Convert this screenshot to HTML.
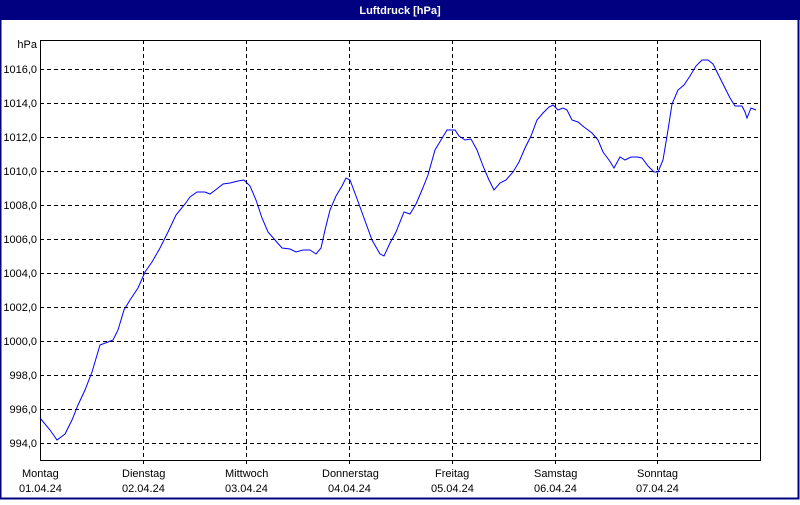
<!DOCTYPE html>
<html><head><meta charset="utf-8"><style>
body{margin:0;width:800px;height:500px;overflow:hidden;background:#fff;font-family:"Liberation Sans",sans-serif}
</style></head><body>
<svg width="800" height="500" xmlns="http://www.w3.org/2000/svg" font-family="Liberation Sans, sans-serif" font-size="11">
<rect x="0" y="0" width="800" height="500" fill="#fff"/>
<rect x="0.5" y="0.5" width="798" height="498" fill="none" stroke="#000080" stroke-width="2"/>
<rect x="0" y="0" width="800" height="20" fill="#000080"/>
<text x="400" y="14" fill="#fff" font-weight="bold" text-anchor="middle">Luftdruck [hPa]</text>
<g stroke="#000" stroke-dasharray="4,3" stroke-width="1">
<line x1="40" y1="69.5" x2="760" y2="69.5"/><line x1="40" y1="103.5" x2="760" y2="103.5"/><line x1="40" y1="137.5" x2="760" y2="137.5"/><line x1="40" y1="171.5" x2="760" y2="171.5"/><line x1="40" y1="205.5" x2="760" y2="205.5"/><line x1="40" y1="239.5" x2="760" y2="239.5"/><line x1="40" y1="273.5" x2="760" y2="273.5"/><line x1="40" y1="307.5" x2="760" y2="307.5"/><line x1="40" y1="341.5" x2="760" y2="341.5"/><line x1="40" y1="375.5" x2="760" y2="375.5"/><line x1="40" y1="409.5" x2="760" y2="409.5"/><line x1="40" y1="443.5" x2="760" y2="443.5"/>
<line x1="143.5" y1="40" x2="143.5" y2="466"/><line x1="246.5" y1="40" x2="246.5" y2="466"/><line x1="349.5" y1="40" x2="349.5" y2="466"/><line x1="452.5" y1="40" x2="452.5" y2="466"/><line x1="555.5" y1="40" x2="555.5" y2="466"/><line x1="657.5" y1="40" x2="657.5" y2="466"/>
</g>
<polyline fill="none" stroke="#000" stroke-width="1" points="40.5,40 40.5,460.5 760.5,460.5 760.5,40.5 40,40.5"/>
<g text-anchor="end" fill="#000">
<text x="37" y="48">hPa</text>
<text x="37" y="73">1016,0</text><text x="37" y="107">1014,0</text><text x="37" y="141">1012,0</text><text x="37" y="175">1010,0</text><text x="37" y="209">1008,0</text><text x="37" y="243">1006,0</text><text x="37" y="277">1004,0</text><text x="37" y="311">1002,0</text><text x="37" y="345">1000,0</text><text x="37" y="379">998,0</text><text x="37" y="413">996,0</text><text x="37" y="447">994,0</text>
</g>
<g fill="#000">
<text x="22" y="477">Montag</text><text x="19" y="492">01.04.24</text>
<text x="122" y="477">Dienstag</text><text x="122" y="492">02.04.24</text>
<text x="225" y="477">Mittwoch</text><text x="225" y="492">03.04.24</text>
<text x="322" y="477">Donnerstag</text><text x="328" y="492">04.04.24</text>
<text x="435" y="477">Freitag</text><text x="431" y="492">05.04.24</text>
<text x="534" y="477">Samstag</text><text x="534" y="492">06.04.24</text>
<text x="637" y="477">Sonntag</text><text x="636" y="492">07.04.24</text>
</g>
<polyline fill="none" stroke="#0000ff" stroke-width="1" points="40,418 50,430 57,440 65,434 72,420 78,405 85,390 92,372 100,345 108,342 113,340 118,330 124,310 130,300 138,288 145,272 152,262 160,248 168,232 176,215 185,204 190,197 197,192 205,192 210,194 218,188 223,184 230,183 238,181 244,180 250,186 256,200 262,218 268,232 275,240 282,248 290,249 296,252 303,250 310,250 316,254 321,248 325,230 330,210 336,196 342,186 346,178 350,180 356,196 364,218 372,240 380,254 384,256 390,243 396,232 404,212 410,214 416,204 422,190 428,175 435,150 441,140 447,130 455,130 459,136 465,140 471,139 477,150 483,166 489,180 494,190 500,183 506,180 513,172 519,162 525,148 531,136 537,120 543,113 549,107 553,105 558,110 563,108 567,110 572,120 578,122 584,127 592,133 598,140 603,152 609,160 614,168 620,157 625,160 631,157 637,157 642,158 648,166 654,172 658,172 663,160 668,130 672,104 678,90 684,85 690,76 696,66 702,60 708,60 713,64 718,74 724,86 730,98 735,106 742,106 745,112 747,118 751,108 756,110"/>
</svg>
</body></html>
